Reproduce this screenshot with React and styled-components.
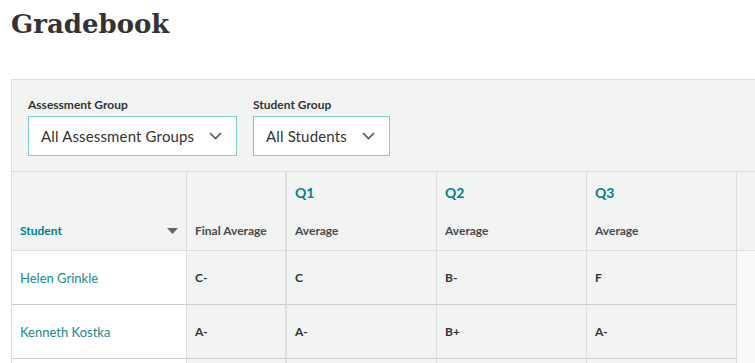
import styled, { createGlobalStyle } from "styled-components";

const GlobalStyle = createGlobalStyle`
  html, body {
    margin: 0;
    padding: 0;
    background: #fff;
  }
  body {
    font-family: "Lato", "Noto Sans", sans-serif;
    color: #333;
    overflow: hidden;
  }
`;

const Page = styled.div`
  padding: 0 0 0 11px;
  width: 755px;
  box-sizing: border-box;
`;

const Title = styled.h1`
  margin: 0;
  padding-top: 7px;
  height: 79px;
  box-sizing: border-box;
  font-family: "DejaVu Serif", "Liberation Serif", serif;
  font-weight: 700;
  font-size: 26px;
  line-height: 34px;
  color: #333;
`;

const Panel = styled.div`
  border-top: 1px solid #ddd;
  border-left: 1px solid #ddd;
  background: #f1f4f3;
  width: 800px;
`;

const Filters = styled.div`
  display: flex;
  gap: 16px;
  padding: 17px 16px 15px;
  border-bottom: 1px solid #ddd;
`;

const Field = styled.div`
  display: flex;
  flex-direction: column;
  gap: 3px;
`;

const Label = styled.label`
  font-size: 12px;
  font-weight: 700;
  line-height: 16px;
  color: #333;
`;

const Select = styled.div`
  display: flex;
  align-items: center;
  justify-content: space-between;
  width: ${(p) => p.$width}px;
  height: 40px;
  box-sizing: border-box;
  padding: 0 14px 0 12px;
  background: #fff;
  border: 1px solid #7fcfc9;
  font-size: 15px;
  letter-spacing: 0.15px;
  color: #333;
`;

const Grid = styled.div`
  display: grid;
  grid-template-columns: 175px 100px 150px 150px 150px 1fr;
`;

const HeadCell = styled.div`
  display: flex;
  flex-direction: column;
  justify-content: space-between;
  height: 79px;
  box-sizing: border-box;
  padding: 12px 8px 11px;
  border-right: ${(p) => (p.$thick ? 2 : p.$last ? 0 : 1)}px solid #ddd;
  border-bottom: 1px solid #ddd;
`;

const Quarter = styled.div`
  font-size: 14px;
  font-weight: 700;
  color: #00818a;
  line-height: 18px;
`;

const SubHead = styled.div`
  display: flex;
  align-items: center;
  justify-content: space-between;
  font-size: 12px;
  font-weight: 700;
  line-height: 16px;
  color: ${(p) => (p.$teal ? "#00818a" : "#4a4a4a")};
`;

const Cell = styled.div`
  display: flex;
  align-items: center;
  height: 54px;
  box-sizing: border-box;
  padding: 0 8px;
  background: ${(p) => (p.$white ? "#fff" : "#f1f4f3")};
  border-right: ${(p) => (p.$thick ? 2 : 1)}px solid #ddd;
  border-bottom: 1px solid #ccc;
  font-size: 12px;
  font-weight: 700;
  color: #333;
`;

const Filler = styled.div`
  height: 54px;
  background: #f9f9f9;
`;

const Name = styled.span`
  font-size: 13px;
  font-weight: 400;
  color: #22898f;
`;

function Chevron() {
  return (
    <svg width="13" height="8" viewBox="0 0 13 8" fill="none">
      <path d="M1 1l5.5 5.5L12 1" stroke="#555" strokeWidth="1.6" />
    </svg>
  );
}

function SortArrow() {
  return (
    <svg width="11" height="6" viewBox="0 0 11 6">
      <path d="M0 0h11L5.5 6z" fill="#666" />
    </svg>
  );
}

const students = [
  { name: "Helen Grinkle", grades: ["C-", "C", "B-", "F"] },
  { name: "Kenneth Kostka", grades: ["A-", "A-", "B+", "A-"] },
  { name: "", grades: ["", "", "", ""] },
];

export default function App() {
  return (
    <Page>
      <GlobalStyle />
      <Title>Gradebook</Title>
      <Panel>
        <Filters>
          <Field>
            <Label>Assessment Group</Label>
            <Select $width={209}>
              All Assessment Groups
              <Chevron />
            </Select>
          </Field>
          <Field>
            <Label>Student Group</Label>
            <Select $width={137}>
              All Students
              <Chevron />
            </Select>
          </Field>
        </Filters>
        <Grid>
          <HeadCell>
            <span />
            <SubHead $teal>
              Student
              <SortArrow />
            </SubHead>
          </HeadCell>
          <HeadCell $thick>
            <span />
            <SubHead>Final Average</SubHead>
          </HeadCell>
          {["Q1", "Q2", "Q3"].map((q) => (
            <HeadCell key={q}>
              <Quarter>{q}</Quarter>
              <SubHead>Average</SubHead>
            </HeadCell>
          ))}
          <HeadCell $last />
          {students.map((s, i) => [
            <Cell key={`n${i}`} $white>
              <Name>{s.name}</Name>
            </Cell>,
            ...s.grades.map((g, j) => (
              <Cell key={`g${i}${j}`} $thick={j === 0}>
                {g}
              </Cell>
            )),
            <Filler key={`f${i}`} />,
          ])}
        </Grid>
      </Panel>
    </Page>
  );
}
